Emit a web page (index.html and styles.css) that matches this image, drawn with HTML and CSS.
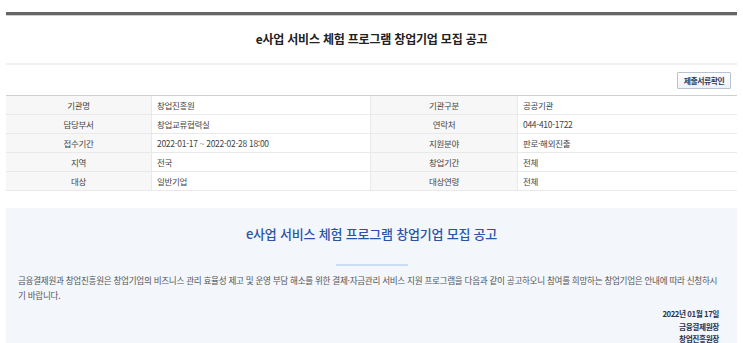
FILE: index.html
```html
<!DOCTYPE html>
<html lang="ko">
<head>
<meta charset="utf-8">
<title>e사업 서비스 체험 프로그램 창업기업 모집 공고</title>
<link rel="stylesheet" href="styles.css">
</head>
<body>
<div class="page">
  <div class="head">
    <h2 class="head-title">e사업 서비스 체험 프로그램 창업기업 모집 공고</h2>
  </div>
  <div class="toolbar">
    <button class="btn" type="button">제출서류확인</button>
  </div>
  <div class="info">
    <div class="row">
      <div class="label">기관명</div><div class="value">창업진흥원</div>
      <div class="label">기관구분</div><div class="value">공공기관</div>
    </div>
    <div class="row">
      <div class="label">담당부서</div><div class="value">창업교류협력실</div>
      <div class="label">연락처</div><div class="value">044-410-1722</div>
    </div>
    <div class="row">
      <div class="label">접수기간</div><div class="value">2022-01-17 ~ 2022-02-28 18:00</div>
      <div class="label">지원분야</div><div class="value">판로·해외진출</div>
    </div>
    <div class="row">
      <div class="label">지역</div><div class="value">전국</div>
      <div class="label">창업기간</div><div class="value">전체</div>
    </div>
    <div class="row">
      <div class="label">대상</div><div class="value">일반기업</div>
      <div class="label">대상연령</div><div class="value">전체</div>
    </div>
  </div>
  <div class="notice">
    <h3 class="notice-title">e사업 서비스 체험 프로그램 창업기업 모집 공고</h3>
    <div class="notice-bar"></div>
    <p class="notice-text">금융결제원과 창업진흥원은 창업기업의 비즈니스 관리 효율성 제고 및 운영 부담 해소를 위한 결제·자금관리 서비스 지원 프로그램을 다음과 같이 공고하오니 참여를 희망하는 창업기업은 안내에 따라 신청하시기 바랍니다.</p>
    <div class="sign">
      <div>2022년 01월 17일</div>
      <div>금융결제원장</div>
      <div>창업진흥원장</div>
    </div>
  </div>
</div>
</body>
</html>
```

FILE: styles.css
```css
* { box-sizing: border-box; }
html, body { margin: 0; padding: 0; background: #fff; }
body {
  font-family: "Noto Sans CJK KR", "Noto Sans", sans-serif;
  color: #333;
}
.page {
  margin: 12px 0 0 6px;
  width: 731px;
}
.head {
  border-top: 3px solid #666;
  box-shadow: inset 0 1px 0 #cfcfcf;
}
.head-title {
  margin: 0;
  height: 50px;
  line-height: 48px;
  text-align: center;
  font-size: 12px;
  font-weight: 700;
  color: #222;
  border-bottom: 2px solid #efefef;
  letter-spacing: -0.2px;
}
.toolbar {
  height: 30px;
  display: flex;
  justify-content: flex-end;
  align-items: center;
  padding-right: 6px;
}
.btn {
  width: 54px;
  height: 17px;
  padding: 0;
  font-family: inherit;
  font-size: 7.8px;
  font-weight: 700;
  color: #2d3a5c;
  letter-spacing: -0.4px;
  background: linear-gradient(#ffffff, #eef1f6);
  border: 1px solid #b9c2d2;
  border-radius: 1px;
}
.info {
  border-top: 1px solid #cfcfcf;
}
.row {
  display: grid;
  grid-template-columns: 146px 219px 147px 219px;
  height: 19px;
  border-bottom: 1px solid #e9e9e9;
  font-size: 8.5px;
  line-height: 18px;
  color: #444;
}
.label {
  background: #f7f7f7;
  text-align: center;
  border-right: 1px solid #e9e9e9;
  letter-spacing: -0.3px;
}
.value {
  padding-left: 5px;
  letter-spacing: -0.3px;
}
.row .value:nth-child(2) { border-right: 1px solid #e9e9e9; }
.notice {
  margin-top: 17px;
  background: #f3f7fc;
  padding: 17px 12px 4px;
  min-height: 140px;
}
.notice-title {
  margin: 0;
  text-align: center;
  font-size: 13px;
  font-weight: 500;
  line-height: 18px;
  color: #2c52a8;
  letter-spacing: -0.2px;
}
.notice-bar {
  width: 72px;
  height: 2px;
  background: #c9def5;
  margin: 21px auto 0;
}
.notice-text {
  margin: 7px 0 0;
  padding-right: 4px;
  font-size: 8.6px;
  line-height: 15px;
  color: #555;
  letter-spacing: -0.3px;
}
.sign {
  margin-top: 5px;
  padding-right: 6px;
  text-align: right;
  font-size: 7.7px;
  font-weight: 700;
  line-height: 12.5px;
  color: #2a3350;
  letter-spacing: -0.4px;
}
```
